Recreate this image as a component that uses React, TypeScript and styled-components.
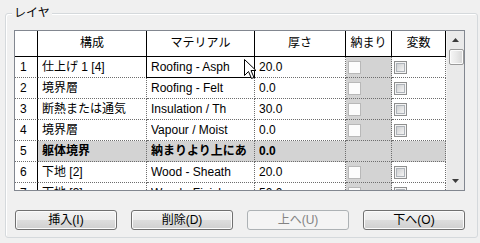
import React from "react";
import styled, { createGlobalStyle } from "styled-components";

const GlobalStyle = createGlobalStyle`
  html, body { margin: 0; padding: 0; background: #f0f0f0; }
  body {
    font-family: "Liberation Sans", "Noto Sans CJK JP", sans-serif;
    font-size: 12px;
    color: #000;
  }
  * { box-sizing: border-box; }
`;

const Page = styled.div`
  width: 480px;
  height: 243px;
  padding: 13px 3px 6px 5px;
`;

const Frame = styled.div`
  position: relative;
  width: 473px;
  height: 225px;
  border: 1px solid #d5d9dc;
  border-radius: 3px;
  box-shadow: inset 1px 1px 0 #ffffff;
  padding: 16px 12px 6px 8px;
`;

const Legend = styled.span`
  position: absolute;
  top: -9px;
  left: 6px;
  padding: 0 2px;
  background: #f0f0f0;
  line-height: 16px;
  font-size: 12px;
`;

const Grid = styled.div`
  position: relative;
  width: 451px;
  height: 161px;
  border: 1px solid #828790;
  background: #fff;
  display: flex;
  overflow: hidden;
`;

const Table = styled.div`
  width: 431px;
  display: flex;
  flex-direction: column;
`;

const HeaderRow = styled.div`
  display: flex;
  height: 26px;
  border-bottom: 1px solid #000;
`;

const HeaderCell = styled.div<{ $w: number }>`
  width: ${(p) => p.$w}px;
  flex: none;
  border-right: 1px solid #000;
  text-align: center;
  line-height: 25px;
  white-space: nowrap;
  overflow: hidden;
`;

const Body = styled.div`
  height: 133px;
  overflow: hidden;
`;

const Row = styled.div<{ $shaded?: boolean }>`
  display: flex;
  height: 21px;
  font-weight: ${(p) => (p.$shaded ? 700 : 400)};
`;

const RowHead = styled.div`
  width: 23px;
  flex: none;
  border-right: 1px solid #000;
  border-bottom: 1px dotted #6d6d6d;
  padding-left: 5px;
  line-height: 20px;
  background: #fff;
  font-weight: 400;
`;

const Cell = styled.div<{ $w: number; $bg?: string; $selected?: boolean; $pad?: number }>`
  position: relative;
  width: ${(p) => p.$w}px;
  flex: none;
  border-right: 1px dotted #6d6d6d;
  border-bottom: 1px dotted #6d6d6d;
  padding-left: ${(p) => (p.$pad ?? 4)}px;
  line-height: 20px;
  white-space: nowrap;
  overflow: ${(p) => (p.$selected ? "visible" : "hidden")};
  background: ${(p) => p.$bg ?? "#fff"};
  display: flex;
  align-items: center;
  &::after {
    content: "";
    display: ${(p) => (p.$selected ? "block" : "none")};
    position: absolute;
    left: -1px;
    top: -1px;
    right: -1px;
    bottom: -1px;
    border: 1px solid #000;
    pointer-events: none;
  }
`;

const Clip = styled.span`
  display: block;
  overflow: hidden;
  white-space: nowrap;
  width: 100%;
`;

const Check = styled.span<{ $disabled?: boolean }>`
  display: block;
  width: 13px;
  height: 13px;
  flex: none;
  border: 1px solid ${(p) => (p.$disabled ? "#b8b8b8" : "#8e8f8f")};
  background: ${(p) =>
    p.$disabled ? "#fcfcfc" : "linear-gradient(135deg, #c4c6c8 0%, #eeeeee 70%, #f8f8f8 100%)"};
  box-shadow: ${(p) =>
    p.$disabled ? "none" : "inset 0 0 0 1px #f4f4f4, inset 0 0 0 2px #aeb3b9"};
`;

const ScrollBar = styled.div`
  width: 18px;
  flex: none;
  background: #eaeaea;
  border-left: 1px solid #f4f4f4;
  display: flex;
  flex-direction: column;
  align-items: center;
`;

const Arrow = styled.div`
  height: 18px;
  width: 100%;
  display: flex;
  align-items: center;
  justify-content: center;
`;

const Thumb = styled.div`
  width: 15px;
  height: 16px;
  margin-left: 1px;
  border: 1px solid #9a9a9a;
  border-radius: 2px;
  background: linear-gradient(90deg, #f6f6f6 0%, #e8e8e8 50%, #d6d6d6 100%);
  box-shadow: inset 0 0 0 1px #fbfbfb;
`;

const Track = styled.div`
  flex: 1;
`;

const Buttons = styled.div`
  margin-top: 19px;
  padding-left: 1px;
  width: 451px;
  display: flex;
  justify-content: space-between;
`;

const Button = styled.div<{ $disabled?: boolean }>`
  width: 102px;
  height: 20px;
  border: 1px solid ${(p) => (p.$disabled ? "#adb2b5" : "#707070")};
  border-radius: 3px;
  background: ${(p) =>
    p.$disabled
      ? "#f4f4f4"
      : "linear-gradient(180deg, #f2f2f2 0%, #ebebeb 50%, #dddddd 51%, #cfcfcf 100%)"};
  box-shadow: inset 0 0 0 1px ${(p) => (p.$disabled ? "#f4f4f4" : "#fbfbfb")};
  color: ${(p) => (p.$disabled ? "#838383" : "#000")};
  display: flex;
  align-items: center;
  justify-content: center;
  line-height: 18px;
  font-size: 12px;
`;

const Cursor = styled.svg`
  position: absolute;
  left: 229px;
  top: 28px;
`;

const W = [23, 109, 108, 91, 46, 54];

type RowData = {
  n: string;
  name: string;
  mat: string;
  thick: string;
  core?: boolean;
};

const rows: RowData[] = [
  { n: "1", name: "仕上げ 1 [4]", mat: "Roofing - Asph", thick: "20.0" },
  { n: "2", name: "境界層", mat: "Roofing - Felt", thick: "0.0" },
  { n: "3", name: "断熱または通気", mat: "Insulation / Th", thick: "30.0" },
  { n: "4", name: "境界層", mat: "Vapour / Moist", thick: "0.0" },
  { n: "5", name: "躯体境界", mat: "納まりより上にあ", thick: "0.0", core: true },
  { n: "6", name: "下地 [2]", mat: "Wood - Sheath", thick: "20.0" },
  { n: "7", name: "下地 [3]", mat: "Wood - Finish", thick: "50.0" },
];

const GRAY = "#d3d3d3";

export default function App() {
  return (
    <Page>
      <GlobalStyle />
      <Frame>
        <Legend>レイヤ</Legend>
        <Grid>
          <Table>
            <HeaderRow>
              <HeaderCell $w={W[0]} />
              <HeaderCell $w={W[1]}>構成</HeaderCell>
              <HeaderCell $w={W[2]}>マテリアル</HeaderCell>
              <HeaderCell $w={W[3]}>厚さ</HeaderCell>
              <HeaderCell $w={W[4]}>納まり</HeaderCell>
              <HeaderCell $w={W[5]}>変数</HeaderCell>
            </HeaderRow>
            <Body>
              {rows.map((r, i) => {
                const bg = r.core ? GRAY : undefined;
                return (
                  <Row key={r.n} $shaded={r.core}>
                    <RowHead>{r.n}</RowHead>
                    <Cell $w={W[1]} $bg={bg}>
                      <Clip>{r.name}</Clip>
                    </Cell>
                    <Cell $w={W[2]} $bg={bg} $selected={i === 0}>
                      <Clip>{r.mat}</Clip>
                    </Cell>
                    <Cell $w={W[3]} $bg={bg}>
                      <Clip>{r.thick}</Clip>
                    </Cell>
                    <Cell $w={W[4]} $bg={GRAY} $pad={2}>
                      {!r.core && <Check $disabled />}
                    </Cell>
                    <Cell $w={W[5]} $bg={bg} $pad={2}>
                      {!r.core && <Check />}
                    </Cell>
                  </Row>
                );
              })}
            </Body>
          </Table>
          <ScrollBar>
            <Arrow>
              <svg width="7" height="4" viewBox="0 0 7 4">
                <path d="M3.5 0 L7 4 L0 4 Z" fill="#3c3c3c" />
              </svg>
            </Arrow>
            <Thumb />
            <Track />
            <Arrow>
              <svg width="7" height="4" viewBox="0 0 7 4">
                <path d="M0 0 L7 0 L3.5 4 Z" fill="#3c3c3c" />
              </svg>
            </Arrow>
          </ScrollBar>
          <Cursor width="13" height="21" viewBox="0 0 13 21">
            <path
              d="M0.5 0.5 L0.5 16.5 L4.5 12.5 L7.5 19.5 L10 18.5 L7 11.5 L12 11.5 Z"
              fill="#fff"
              stroke="#000"
              strokeWidth="1"
              strokeLinejoin="miter"
            />
          </Cursor>
        </Grid>
        <Buttons>
          <Button>挿入(I)</Button>
          <Button>削除(D)</Button>
          <Button $disabled>上へ(U)</Button>
          <Button>下へ(O)</Button>
        </Buttons>
      </Frame>
    </Page>
  );
}
